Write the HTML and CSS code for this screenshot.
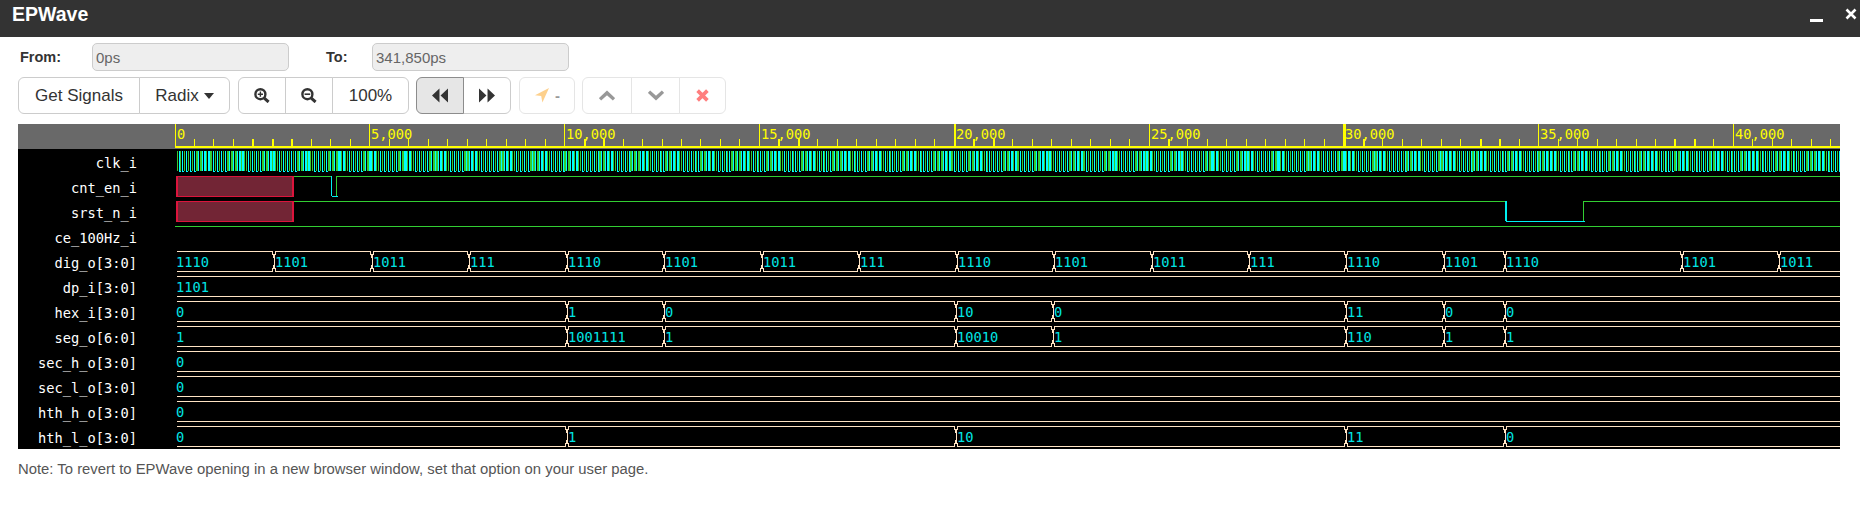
FILE: index.html
```html
<!DOCTYPE html>
<html lang="en">
<head>
    <meta charset="UTF-8">
    <meta name="viewport" content="width=device-width, initial-scale=1.0">
    <title>EPWave</title>
    <link rel="stylesheet" href="styles.css">
</head>
<body>
    <div class="title-bar">
        <h1>EPWave</h1>
        <div class="title-icons">
            <svg class="icon-min" viewBox="0 0 13 3"><rect width="13" height="3" fill="#fff"/></svg>
            <svg class="icon-close" viewBox="0 0 12 12"><path d="M1.5 1.5L10.5 10.5M10.5 1.5L1.5 10.5" stroke="#fff" stroke-width="2.6" fill="none"/></svg>
        </div>
    </div>

    <div class="range-row">
        <label class="from-label">From:</label>
        <input class="range-input" type="text" value="0ps" disabled>
        <label class="to-label">To:</label>
        <input class="range-input" type="text" value="341,850ps" disabled>
    </div>

    <div class="toolbar">
        <div class="btn-group">
            <button class="btn w-signals">Get Signals</button>
            <button class="btn w-radix">Radix <span class="caret"></span></button>
        </div>
        <div class="btn-group push">
            <button class="btn w-icon">
                <svg class="icon" viewBox="0.8 0 15.6 15"><circle cx="7" cy="6.2" r="5" fill="none" stroke="#333" stroke-width="2.4"/><path d="M10.8 10.2L15.2 14" stroke="#333" stroke-width="3"/><path d="M4.4 6.2H9.6M7 3.6V8.8" stroke="#333" stroke-width="1.4"/></svg>
            </button>
            <button class="btn w-icon">
                <svg class="icon" viewBox="0.8 0 15.6 15"><circle cx="7" cy="6.2" r="5" fill="none" stroke="#333" stroke-width="2.4"/><path d="M10.8 10.2L15.2 14" stroke="#333" stroke-width="3"/><path d="M4.2 6.2H9.8" stroke="#333" stroke-width="1.6"/></svg>
            </button>
            <button class="btn w-zoom">100%</button>
        </div>
        <div class="btn-group">
            <button class="btn w-icon active">
                <svg class="icon" viewBox="1 0 15 13"><path d="M8 0V13L1 6.5ZM16 0V13L9 6.5Z" fill="#333"/></svg>
            </button>
            <button class="btn w-icon">
                <svg class="icon" viewBox="0 0 15 13"><path d="M0 0V13L7 6.5ZM8 0V13L15 6.5Z" fill="#333"/></svg>
            </button>
        </div>
        <div class="btn-group disabled push">
            <button class="btn w-marker">
                <svg class="icon" viewBox="0 0 14 15"><path d="M14 0L7.4 14.5L6.2 8L0 7.2Z" fill="#fda31b"/></svg>
                <span class="marker-text">-</span>
            </button>
        </div>
        <div class="btn-group disabled">
            <button class="btn w-up">
                <svg class="icon" viewBox="0 0 16 10"><path d="M1 8.8L8 2.4L15 8.8" fill="none" stroke="#333" stroke-width="3.4"/></svg>
            </button>
            <button class="btn w-down">
                <svg class="icon" viewBox="0 0 16 10"><path d="M1 1.2L8 7.6L15 1.2" fill="none" stroke="#333" stroke-width="3.4"/></svg>
            </button>
            <button class="btn w-clear">
                <svg class="icon-clear" viewBox="0 0 12 12"><path d="M1.5 1.5L10.5 10.5M10.5 1.5L1.5 10.5" fill="none" stroke="#ff0000" stroke-width="3.4"/></svg>
            </button>
        </div>
    </div>

    <div class="wave-panel">
        <div class="names">
            <div class="names-head"></div>
            <div class="name">clk_i</div>
            <div class="name">cnt_en_i</div>
            <div class="name">srst_n_i</div>
            <div class="name">ce_100Hz_i</div>
            <div class="name">dig_o[3:0]</div>
            <div class="name">dp_i[3:0]</div>
            <div class="name">hex_i[3:0]</div>
            <div class="name">seg_o[6:0]</div>
            <div class="name">sec_h_o[3:0]</div>
            <div class="name">sec_l_o[3:0]</div>
            <div class="name">hth_h_o[3:0]</div>
            <div class="name">hth_l_o[3:0]</div>
        </div>
        <svg id="wave" class="wave" width="1665" height="325" shape-rendering="crispEdges"></svg>
    </div>

    <p class="note">Note: To revert to EPWave opening in a new browser window, set that option on your user page.</p>

    <script src="wave.js"></script>
</body>
</html>
```

FILE: styles.css
```css
body {
    font-family: 'Liberation Sans', Arial, sans-serif;
    margin: 0;
    background: #fff;
    color: #333;
}
.title-bar {
    display: flex;
    justify-content: space-between;
    height: 37px;
    background-color: #333;
    color: #fff;
}
.title-bar h1 {
    margin: 0;
    padding: 2px 0 0 12px;
    font-size: 19.5px;
    line-height: 24px;
    font-weight: bold;
}
.title-icons {
    display: flex;
    align-items: flex-start;
    gap: 22px;
    padding: 8px 3px 0 0;
}
.icon-min {
    width: 13px;
    height: 3px;
    margin-top: 11px;
}
.icon-close {
    width: 12px;
    height: 12px;
}
.range-row {
    display: flex;
    align-items: center;
    height: 28px;
    margin: 6px 0 0 20px;
}
.range-row label {
    font-size: 14.5px;
    font-weight: bold;
}
.from-label {
    width: 72px;
}
.to-label {
    width: 46px;
    margin-left: 37px;
}
.range-input {
    box-sizing: border-box;
    width: 197px;
    height: 28px;
    padding: 0 3px;
    font-family: inherit;
    font-size: 15px;
    color: #666;
    background-color: #eee;
    border: 1px solid #ccc;
    border-radius: 5px;
}
.toolbar {
    display: flex;
    gap: 7px;
    height: 37px;
    margin: 6px 0 0 18px;
}
.btn-group {
    display: flex;
}
.btn-group.push {
    margin-left: 1px;
}
.btn-group.disabled {
    opacity: 0.5;
}
.btn {
    box-sizing: border-box;
    display: flex;
    align-items: center;
    justify-content: center;
    height: 37px;
    padding: 0;
    margin-left: -1px;
    font-family: inherit;
    font-size: 17px;
    color: #333;
    background-color: #fff;
    border: 1px solid #ccc;
}
.btn:first-child {
    margin-left: 0;
    border-radius: 6px 0 0 6px;
}
.btn:last-child {
    border-radius: 0 6px 6px 0;
}
.btn:only-child {
    border-radius: 6px;
}
.btn.active {
    position: relative;
    background-color: #e6e6e6;
    border-color: #8c8c8c;
    z-index: 1;
}
.w-signals { width: 122px; }
.w-radix { width: 91px; }
.w-icon { width: 48px; }
.w-zoom { width: 77px; }
.w-marker { width: 56px; }
.w-up { width: 50px; }
.w-down { width: 49px; }
.w-clear { width: 47px; }
.caret {
    width: 0;
    height: 0;
    margin-left: 5px;
    border-top: 6px solid #333;
    border-left: 5px solid transparent;
    border-right: 5px solid transparent;
}
.icon {
    display: block;
    width: 16px;
    height: 15px;
}
.icon-clear {
    display: block;
    width: 13px;
    height: 13px;
}
.marker-text {
    margin-left: 5px;
    font-size: 15px;
    font-weight: bold;
}
.wave-panel {
    display: flex;
    width: 1822px;
    height: 325px;
    margin: 10px 0 0 18px;
    background-color: #000;
}
.names {
    width: 157px;
    flex-shrink: 0;
}
.names-head {
    height: 25px;
    background-color: #696969;
}
.name {
    box-sizing: border-box;
    height: 25px;
    padding: 2px 38px 0 0;
    font-family: 'DejaVu Sans Mono', monospace;
    font-size: 13.7px;
    line-height: 25px;
    text-align: right;
    color: #fff;
}
.wave {
    display: block;
}
.ruler-bg { fill: #696969; }
.ruler-line { fill: #ffff00; }
.ruler-text {
    fill: #ffff00;
    font-family: 'DejaVu Sans Mono', monospace;
    font-size: 13.7px;
}
.val-text {
    fill: #00e5e5;
    font-family: 'DejaVu Sans Mono', monospace;
    font-size: 13.7px;
}
.bus { fill: none; stroke: #ffe4c4; stroke-width: 1; }
.hi { fill: none; stroke: #32cd32; stroke-width: 1; }
.lo { fill: none; stroke: #00f0f0; stroke-width: 1; }
.clk-hi { fill: #32cd32; }
.clk-lo { fill: #00ffff; }
.xbox { fill: #722535; stroke: #dc143c; stroke-width: 1.5; }
.xedge { fill: #dc143c; }
.note {
    margin: 10px 0 0 18px;
    font-size: 14.85px;
    line-height: 20px;
    color: #555;
}
```

FILE: wave.js
```js
const svg = document.getElementById('wave');
const NS = 'http://www.w3.org/2000/svg';
const PANEL_X = 175; // svg left edge in the page, also time 0
const STEP = 19.48; // px per 500 units on the ruler
const WIDTH = 1665;
const START = 2; // waves start just after the time 0 line
const CYCLE = 97.45; // dig_o refresh step

function add(tag, attrs, text) {
    const el = document.createElementNS(NS, tag);
    for (const key in attrs) el.setAttribute(key, attrs[key]);
    if (text !== undefined) el.textContent = text;
    svg.appendChild(el);
    return el;
}

// row index -> top of the trace
function rowTop(i) {
    return 27 + 25 * i;
}

function drawRuler() {
    add('rect', { class: 'ruler-bg', x: 0, y: 0, width: WIDTH, height: 25 });
    add('rect', { class: 'ruler-line', x: 0, y: 22, width: WIDTH, height: 2 });
    const boldMinor = [4, 5, 6, 21, 22, 31, 32, 41, 42, 51, 61, 67, 68, 77, 78];
    const boldMajor = { 40: 2, 60: 3 };
    for (let k = 0; k * STEP < WIDTH; k++) {
        const x = Math.floor(k * STEP);
        if (k % 10 === 0) {
            add('rect', { class: 'ruler-line', x: x, y: 0, width: boldMajor[k] || 1, height: 23 });
            const label = (k * 500).toLocaleString('en-US');
            add('text', { class: 'ruler-text', x: x + 2, y: 15 }, label);
        } else {
            add('rect', { class: 'ruler-line', x: x, y: 15, width: boldMinor.includes(k) ? 2 : 1, height: 8 });
        }
    }
}

function bar(cls, x, y, w, h) {
    return `<rect class="${cls}" x="${x}" y="${y}" width="${w}" height="${h}"/>`;
}

// the clock is finer than the pixel grid, so it aliases into bands:
// half of each beat leans cyan with low stubs, the other half leans green
function drawClock() {
    const period = 3.88;
    const beat = 33.6;
    const top = rowTop(0);
    let out = '';
    for (let x = START; x < WIDTH; x += period) {
        const px = Math.floor(x);
        const phase = ((x - START) % beat) / beat;
        if (phase < 0.5) {
            out += bar('clk-hi', px, top, 1, 20);
            out += bar('clk-lo', px + 2, top, 1, 20);
            out += bar('clk-lo', px + 2, top + 20, 2, 1);
        } else if (phase < 0.75) {
            out += bar('clk-hi', px, top, 2, 20);
            out += bar('clk-lo', px + 2, top, 1, 20);
        } else {
            out += bar('clk-lo', px, top, 2, 20);
            out += bar('clk-hi', px + 2, top, 1, 20);
        }
    }
    const group = add('g', {});
    group.innerHTML = out;
}

function unknownBox(i) {
    const top = rowTop(i);
    add('rect', { class: 'xbox', x: START, y: top + 0.5, width: 116, height: 20 });
    add('rect', { class: 'xedge', x: START + 115, y: top, width: 2, height: 21 });
}

function drawBits() {
    const endX = START + 117;
    // cnt_en_i
    let top = rowTop(1);
    unknownBox(1);
    add('path', { class: 'hi', d: `M${endX} ${top + 0.5}H156.5M161.5 ${top + 21}V${top + 0.5}H${WIDTH}` });
    add('path', { class: 'lo', d: `M156.5 ${top}V${top + 20}M157 ${top + 20.5}H163` });
    // srst_n_i
    top = rowTop(2);
    unknownBox(2);
    add('path', { class: 'hi', d: `M${endX} ${top + 0.5}H1330M1408.5 ${top + 20}V${top + 0.5}H${WIDTH}` });
    add('path', { class: 'lo', d: `M1330.5 ${top}V${top + 20}M1331.5 ${top}V${top + 20}M1331 ${top + 20.5}H1410` });
    // ce_100Hz_i
    top = rowTop(3);
    add('path', { class: 'hi', d: `M0 ${top + 0.5}H${WIDTH}` });
}

// segs: list of [page x of the change, value]
function drawBus(i, segs) {
    const top = rowTop(i) + 0.5;
    const bot = top + 20;
    const mid = top + 10;
    let d = '';
    segs.forEach((seg, n) => {
        const from = n === 0 ? START : Math.round(seg[0] - PANEL_X);
        const to = n + 1 < segs.length ? Math.round(segs[n + 1][0] - PANEL_X) : WIDTH;
        const a = n === 0 ? from : from + 2;
        const b = n + 1 < segs.length ? to - 2 : to;
        d += `M${a} ${top}H${b}M${a} ${bot}H${b}`;
        if (n > 0) d += `M${a} ${top}L${from} ${mid - 4}V${mid + 4}L${a} ${bot}`;
        if (n + 1 < segs.length) d += `M${b} ${top}L${to} ${mid - 4}V${mid + 4}L${b} ${bot}`;
        add('text', { class: 'val-text', x: n === 0 ? 1 : from + 1, y: top + 15.5 }, seg[1]);
    });
    add('path', { class: 'bus', d: d });
}

function digSegs() {
    const vals = ['1110', '1101', '1011', '111'];
    const segs = [[PANEL_X, vals[0]]];
    for (let k = 1; k <= 13; k++) {
        segs.push([177 + CYCLE * k, vals[k % 4]]);
    }
    segs.push([1505, '1110'], [1682, '1101'], [1779, '1011']);
    return segs;
}

drawRuler();
drawClock();
drawBits();
drawBus(4, digSegs());
drawBus(5, [[PANEL_X, '1101']]);
drawBus(6, [[PANEL_X, '0'], [567, '1'], [664, '0'], [956, '10'], [1053, '0'], [1346, '11'], [1444, '0'], [1505, '0']]);
drawBus(7, [[PANEL_X, '1'], [567, '1001111'], [664, '1'], [956, '10010'], [1053, '1'], [1346, '110'], [1444, '1'], [1505, '1']]);
drawBus(8, [[PANEL_X, '0']]);
drawBus(9, [[PANEL_X, '0']]);
drawBus(10, [[PANEL_X, '0']]);
drawBus(11, [[PANEL_X, '0'], [567, '1'], [956, '10'], [1346, '11'], [1505, '0']]);
```
